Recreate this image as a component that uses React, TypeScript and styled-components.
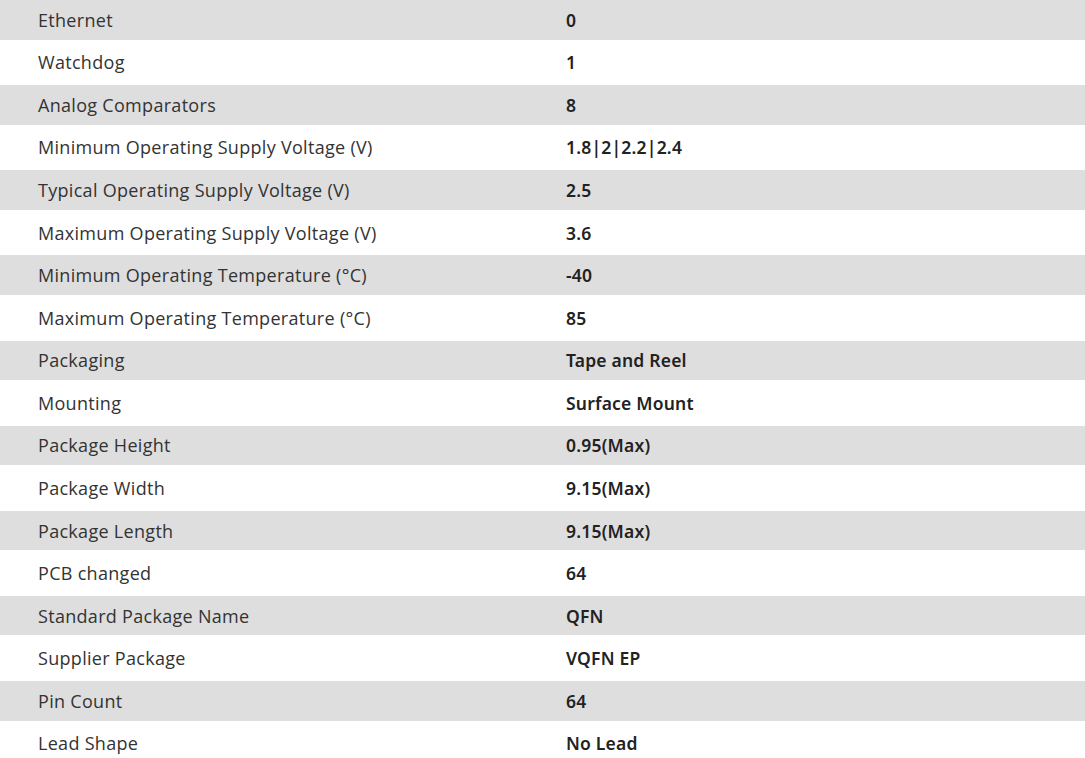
import React from 'react';
import styled, { createGlobalStyle } from 'styled-components';

const GlobalStyle = createGlobalStyle`
    html, body {
        margin: 0;
        padding: 0;
        background: #ffffff;
    }
`;

const specs: [string, string][] = [
    ['Ethernet', '0'],
    ['Watchdog', '1'],
    ['Analog Comparators', '8'],
    ['Minimum Operating Supply Voltage (V)', '1.8|2|2.2|2.4'],
    ['Typical Operating Supply Voltage (V)', '2.5'],
    ['Maximum Operating Supply Voltage (V)', '3.6'],
    ['Minimum Operating Temperature (°C)', '-40'],
    ['Maximum Operating Temperature (°C)', '85'],
    ['Packaging', 'Tape and Reel'],
    ['Mounting', 'Surface Mount'],
    ['Package Height', '0.95(Max)'],
    ['Package Width', '9.15(Max)'],
    ['Package Length', '9.15(Max)'],
    ['PCB changed', '64'],
    ['Standard Package Name', 'QFN'],
    ['Supplier Package', 'VQFN EP'],
    ['Pin Count', '64'],
    ['Lead Shape', 'No Lead'],
];

const App: React.FC = () => {
    return (
        <>
            <GlobalStyle />
            <Table>
                {specs.map(([label, value], key) => (
                    <Row key={key} shaded={key % 2 === 0}>
                        <Label>{label}</Label>
                        <Value>{value}</Value>
                    </Row>
                ))}
            </Table>
        </>
    );
};

const Table = styled.div`
    display: flex;
    flex-direction: column;
    width: 1085px;
`;

const Row = styled.div<{ shaded: boolean }>`
    display: grid;
    grid-template-columns: 528px 1fr;
    align-items: center;
    height: ${(p) => (p.shaded ? '39.6px' : '45.54px')};
    padding-left: 38px;
    background: ${(p) => (p.shaded ? '#dedede' : '#ffffff')};
`;

const Label = styled.div`
    font-family: 'Open Sans', 'Liberation Sans', sans-serif;
    font-size: 18px;
    letter-spacing: 0.3px;
    color: #333333;
`;

const Value = styled.div`
    font-family: 'Noto Sans', 'Liberation Sans', sans-serif;
    font-size: 17.5px;
    font-weight: 600;
    letter-spacing: 0.2px;
    color: #222222;
`;

export default App;
